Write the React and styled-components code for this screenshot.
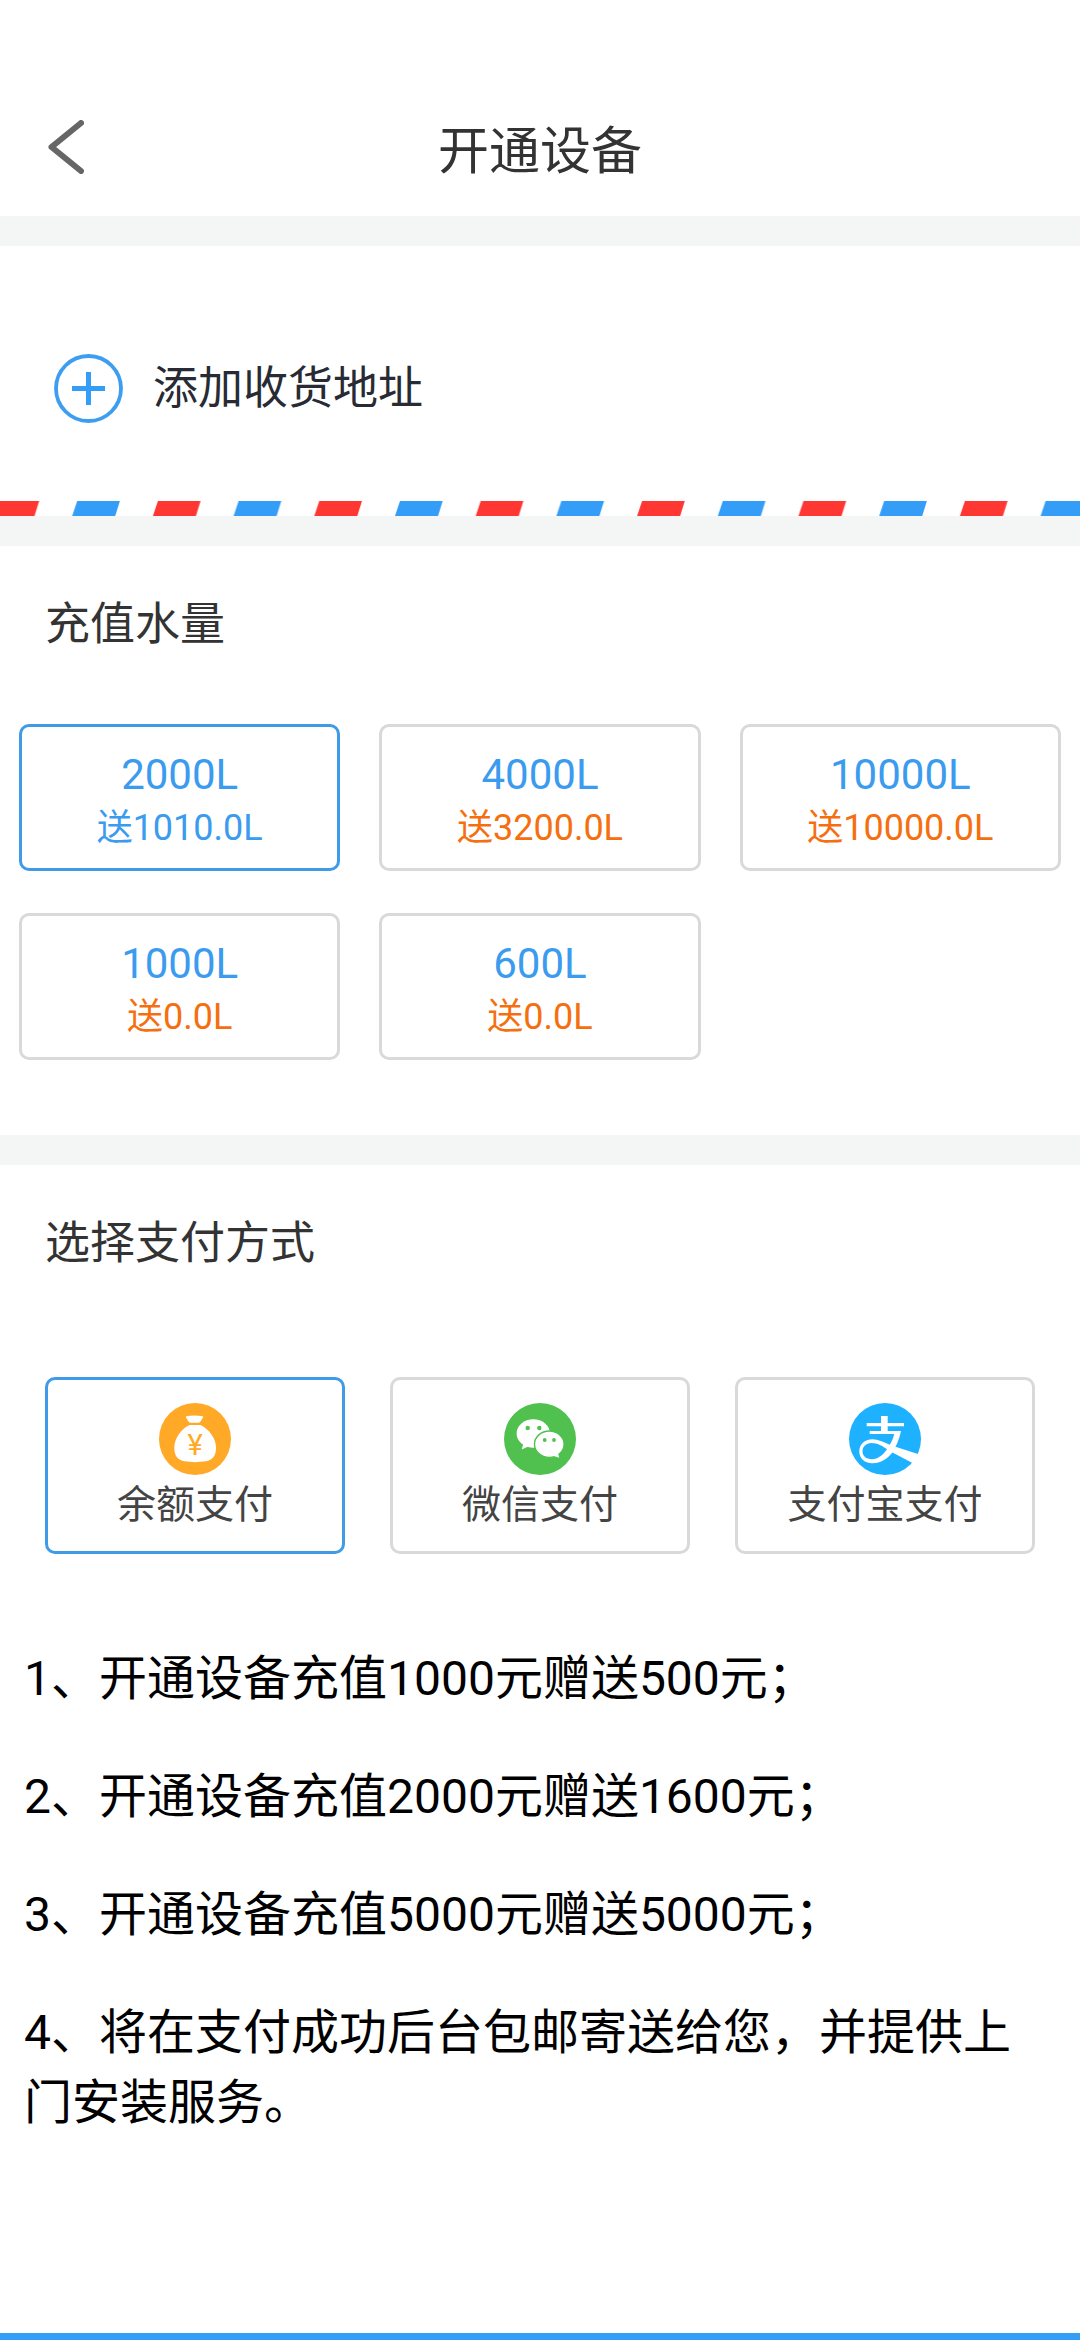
import React, { useState } from 'react';
import styled, { createGlobalStyle } from 'styled-components';

const packages = [
    { id: 1, amount: '2000L', gift: '送1010.0L' },
    { id: 2, amount: '4000L', gift: '送3200.0L' },
    { id: 3, amount: '10000L', gift: '送10000.0L' },
    { id: 4, amount: '1000L', gift: '送0.0L' },
    { id: 5, amount: '600L', gift: '送0.0L' },
];

const notes = [
    '1、开通设备充值1000元赠送500元；',
    '2、开通设备充值2000元赠送1600元；',
    '3、开通设备充值5000元赠送5000元；',
    '4、将在支付成功后台包邮寄送给您，并提供上门安装服务。',
];

const BackIcon = () => (
    <svg width="36" height="54" viewBox="0 0 36 54" fill="none" aria-hidden="true">
        <path d="M33 3L3.500 27L33 51" stroke="#666666" strokeWidth="6" strokeLinecap="round" strokeLinejoin="round" />
    </svg>
);

const AddIcon = () => (
    <svg width="69" height="69" viewBox="0 0 69 69" fill="none" aria-hidden="true">
        <circle cx="34.500" cy="34.500" r="32.500" stroke="#3d9df0" strokeWidth="3.800" />
        <path d="M34.500 18V51M18 34.500H51" stroke="#339df8" strokeWidth="5" />
    </svg>
);

const BalanceIcon = () => (
    <svg width="72" height="72" viewBox="0 0 72 72" aria-hidden="true">
        <circle cx="36" cy="36" r="36" fill="#ffa927" />
        <path d="M27 14.500Q26.300 13 28 13Q35.500 12 43 13Q44.700 13 44 14.500L41.500 18.500Q40.700 19.700 39.500 19.700H31.500Q30.300 19.700 29.500 18.500Z" fill="#fff" />
        <path d="M30.500 22H41.500C50 26.500 57 35 57 45C57 53 53 57 47 58.300C40 59.400 32 59.400 25.500 58.300C19 57 15.300 53 15.300 45C15.300 35 22 26.500 30.500 22Z" fill="#fff" />
        <text x="36" y="52" textAnchor="middle" fontSize="29" fill="#ffa927">¥</text>
    </svg>
);

const WechatIcon = () => (
    <svg width="72" height="72" viewBox="0 0 72 72" aria-hidden="true">
        <circle cx="36" cy="36" r="36" fill="#50c14f" />
        <ellipse cx="29.300" cy="30.500" rx="16.700" ry="14.200" fill="#fff" />
        <path d="M19.500 40L17.700 46.600L25.500 43Z" fill="#fff" />
        <circle cx="23.700" cy="25" r="2.200" fill="#50c14f" />
        <circle cx="35.300" cy="25" r="2.200" fill="#50c14f" />
        <ellipse cx="45.300" cy="41.200" rx="14.800" ry="13.200" fill="#fff" stroke="#50c14f" strokeWidth="1.400" />
        <path d="M48 52.500L55.200 54.700L53.800 49Z" fill="#fff" />
        <circle cx="40.700" cy="37" r="1.900" fill="#50c14f" />
        <circle cx="50" cy="37" r="1.900" fill="#50c14f" />
    </svg>
);

const AlipayIcon = () => (
    <svg width="72" height="72" viewBox="0 0 72 72" aria-hidden="true">
        <circle cx="36" cy="36" r="36" fill="#1eb1ff" />
        <path d="M32 13H38.700V20H55V23.300H38.700V28H52C50.500 35 48.500 40 46.500 43.800L72 52V64L62.500 59.500L43.500 49.500C38 56 32 60.300 23.500 60.300C15 60.300 10.300 55 10.300 48.500C10.300 41.500 15.500 36.300 23.500 36.300C29 36.300 34.500 39 40.800 41.800C42.800 38.500 44.300 35 45.200 31H20.700V28H32V23.300H17.700V20H32ZM38 46.300C33.500 43 28.500 40 22.500 40C17 40 13.500 43.800 13.500 48.300C13.500 53 17 56.200 23 56.200C29 56.200 34 52 38 46.300Z" fill="#fff" fillRule="evenodd" />
    </svg>
);

// airmail edge under the address block
const MailEdge = () => (
    <Edge aria-hidden="true">
        <defs>
            <pattern id="mail" x="-8.500" width="161.400" height="15" patternUnits="userSpaceOnUse">
                <path d="M5 0H47.700L43 15H0Z" fill="#ff3733" />
                <path d="M85.700 0H128.400L123.700 15H80.700Z" fill="#339df8" />
            </pattern>
        </defs>
        <rect width="100%" height="15" fill="url(#mail)" />
    </Edge>
);

const payments = [
    { id: 'balance', name: '余额支付', Icon: BalanceIcon },
    { id: 'wechat', name: '微信支付', Icon: WechatIcon },
    { id: 'alipay', name: '支付宝支付', Icon: AlipayIcon },
];

const App = () => {
    const [selected, setSelected] = useState(1);
    const [payment, setPayment] = useState('balance');

    return (
        <>
            <GlobalStyle />
            <Page>
                <Header>
                    <BackButton type="button" aria-label="返回">
                        <BackIcon />
                    </BackButton>
                    <Title>开通设备</Title>
                </Header>
                <Divider />
                <AddressButton type="button">
                    <AddIcon />
                    <span>添加收货地址</span>
                </AddressButton>
                <MailEdge />
                <Divider />
                <section>
                    <SectionTitle>充值水量</SectionTitle>
                    <PackageGrid>
                        {packages.map(item => (
                            <PackageButton
                                key={item.id}
                                type="button"
                                $active={item.id === selected}
                                aria-pressed={item.id === selected}
                                onClick={() => setSelected(item.id)}
                            >
                                <Amount>{item.amount}</Amount>
                                <Gift $active={item.id === selected}>{item.gift}</Gift>
                            </PackageButton>
                        ))}
                    </PackageGrid>
                </section>
                <Divider />
                <section>
                    <SectionTitle>选择支付方式</SectionTitle>
                    <PaymentGrid>
                        {payments.map(({ id, name, Icon }) => (
                            <PaymentButton
                                key={id}
                                type="button"
                                $active={id === payment}
                                aria-pressed={id === payment}
                                onClick={() => setPayment(id)}
                            >
                                <Icon />
                                <span>{name}</span>
                            </PaymentButton>
                        ))}
                    </PaymentGrid>
                </section>
                <Notes>
                    {notes.map(note => (
                        <p key={note}>{note}</p>
                    ))}
                </Notes>
                <Footer />
            </Page>
        </>
    );
}

const GlobalStyle = createGlobalStyle`
    * {
        box-sizing: border-box;
    }

    body {
        margin: 0;
        background: #FFFFFF;
        font-family: Roboto, "Noto Sans CJK SC", sans-serif;
    }

    button {
        padding: 0;
        border: none;
        background: none;
        font-family: inherit;
        cursor: pointer;
    }

    svg {
        display: block;
    }
`;

const Page = styled.main`
    display: flex;
    flex-direction: column;
    min-height: 100vh;
`;

const Header = styled.header`
    display: grid;
    grid-template-columns: 132px 1fr 132px;
    align-items: center;
    height: 216px;
    padding-top: 78px;
`;

const BackButton = styled.button`
    display: flex;
    align-items: center;
    height: 132px;
    padding-left: 48px;
`;

const Title = styled.h1`
    margin: 0;
    padding-top: 9px;
    font-weight: normal;
    font-size: 51px;
    line-height: 72px;
    text-align: center;
    color: #333333;
`;

const Divider = styled.div`
    height: 30px;
    background: #F4F6F6;
`;

const AddressButton = styled.button`
    display: flex;
    align-items: center;
    gap: 30px;
    height: 255px;
    padding: 30px 54px 0;
    font-size: 45px;
    line-height: 66px;
    color: #282B33;
`;

const Edge = styled.svg`
    width: 100%;
    height: 15px;
`;

const SectionTitle = styled.h2`
    margin: 0;
    padding: 46px 45px 0;
    font-weight: normal;
    font-size: 45px;
    line-height: 66px;
    color: #333333;
`;

const PackageGrid = styled.div`
    display: grid;
    grid-template-columns: repeat(3, 1fr);
    gap: 42px 39px;
    padding: 66px 19px 75px;
`;

const OptionButton = styled.button`
    display: flex;
    flex-direction: column;
    align-items: center;

    && {
        border: 3px solid ${props => (props.$active ? '#3F9AE8' : '#D9D9D9')};
        border-radius: 10px;
    }
`;

const PackageButton = styled(OptionButton)`
    height: 147px;
    padding-top: 21px;
`;

const Amount = styled.span`
    font-size: 42px;
    line-height: 54px;
    color: #3A9BEF;
`;

const Gift = styled.span`
    font-size: 36px;
    line-height: 52px;
    color: ${props => (props.$active ? '#3A9BEF' : '#F56F10')};
`;

const PaymentGrid = styled.div`
    display: grid;
    grid-template-columns: repeat(3, 1fr);
    gap: 45px;
    padding: 100px 45px 0;
`;

const PaymentButton = styled(OptionButton)`
    height: 177px;
    padding-top: 23px;
    font-size: 39px;
    line-height: 60px;
    color: #444444;
`;

const Notes = styled.div`
    flex: 1;
    padding: 90px 24px 42px;
    font-size: 48px;
    line-height: 70px;
    color: #000000;

    p {
        margin: 0 0 48px;
    }
`;

const Footer = styled.footer`
    height: 7px;
    background: #339DF8;
`;

export default App;
